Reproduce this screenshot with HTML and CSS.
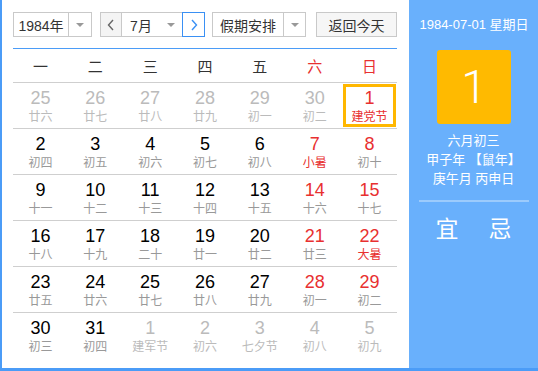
FILE: index.html
```html
<!DOCTYPE html>
<html lang="zh-CN">
  <head>
    <meta charset="UTF-8" />
    <title>万年历</title>
    <link rel="stylesheet" href="styles.css">
  </head>
  <body>
    <div class="calendar">
      <div class="main">
        <div class="toolbar">
          <div class="select year-select">
            <span class="select-text">1984年</span>
            <span class="select-arrow"></span>
          </div>
          <div class="month-group">
            <button class="nav-btn"><svg width="8" height="12" viewBox="0 0 8 12"><polyline points="6,1 1.5,6 6,11" fill="none" stroke="#666" stroke-width="1.4"/></svg></button>
            <div class="select month-select">
              <span class="select-text">7月</span>
              <span class="select-arrow"></span>
            </div>
            <button class="nav-btn next"><svg width="8" height="12" viewBox="0 0 8 12"><polyline points="2,1 6.5,6 2,11" fill="none" stroke="#3a90f4" stroke-width="1.4"/></svg></button>
          </div>
          <div class="select holiday-select">
            <span class="select-text">假期安排</span>
            <span class="select-arrow"></span>
          </div>
          <button class="today-btn">返回今天</button>
        </div>
        <div class="weekdays">
          <span>一</span><span>二</span><span>三</span><span>四</span><span>五</span><span class="red">六</span><span class="red">日</span>
        </div>
        <div class="days">
          <div class="week">
            <div class="day other"><b>25</b><i>廿六</i></div>
            <div class="day other"><b>26</b><i>廿七</i></div>
            <div class="day other"><b>27</b><i>廿八</i></div>
            <div class="day other"><b>28</b><i>廿九</i></div>
            <div class="day other"><b>29</b><i>初一</i></div>
            <div class="day other"><b>30</b><i>初二</i></div>
            <div class="day red today"><b>1</b><i class="fest">建党节</i></div>
          </div>
          <div class="week">
            <div class="day"><b>2</b><i>初四</i></div>
            <div class="day"><b>3</b><i>初五</i></div>
            <div class="day"><b>4</b><i>初六</i></div>
            <div class="day"><b>5</b><i>初七</i></div>
            <div class="day"><b>6</b><i>初八</i></div>
            <div class="day red"><b>7</b><i class="fest">小暑</i></div>
            <div class="day red"><b>8</b><i>初十</i></div>
          </div>
          <div class="week">
            <div class="day"><b>9</b><i>十一</i></div>
            <div class="day"><b>10</b><i>十二</i></div>
            <div class="day"><b>11</b><i>十三</i></div>
            <div class="day"><b>12</b><i>十四</i></div>
            <div class="day"><b>13</b><i>十五</i></div>
            <div class="day red"><b>14</b><i>十六</i></div>
            <div class="day red"><b>15</b><i>十七</i></div>
          </div>
          <div class="week">
            <div class="day"><b>16</b><i>十八</i></div>
            <div class="day"><b>17</b><i>十九</i></div>
            <div class="day"><b>18</b><i>二十</i></div>
            <div class="day"><b>19</b><i>廿一</i></div>
            <div class="day"><b>20</b><i>廿二</i></div>
            <div class="day red"><b>21</b><i>廿三</i></div>
            <div class="day red"><b>22</b><i class="fest">大暑</i></div>
          </div>
          <div class="week">
            <div class="day"><b>23</b><i>廿五</i></div>
            <div class="day"><b>24</b><i>廿六</i></div>
            <div class="day"><b>25</b><i>廿七</i></div>
            <div class="day"><b>26</b><i>廿八</i></div>
            <div class="day"><b>27</b><i>廿九</i></div>
            <div class="day red"><b>28</b><i>初一</i></div>
            <div class="day red"><b>29</b><i>初二</i></div>
          </div>
          <div class="week">
            <div class="day"><b>30</b><i>初三</i></div>
            <div class="day"><b>31</b><i>初四</i></div>
            <div class="day other"><b>1</b><i>建军节</i></div>
            <div class="day other"><b>2</b><i>初六</i></div>
            <div class="day other"><b>3</b><i>七夕节</i></div>
            <div class="day other"><b>4</b><i>初八</i></div>
            <div class="day other"><b>5</b><i>初九</i></div>
          </div>
        </div>
      </div>
      <div class="side">
        <p class="side-date">1984-07-01 星期日</p>
        <div class="big-day">1</div>
        <p class="lunar">六月初三</p>
        <p class="lunar">甲子年 【鼠年】</p>
        <p class="lunar">庚午月 丙申日</p>
        <div class="side-line"></div>
        <div class="yiji">
          <span>宜</span>
          <span>忌</span>
        </div>
      </div>
    </div>
  </body>
</html>
```

FILE: styles.css
```css
* {
  box-sizing: border-box;
  font-family: "Liberation Sans", "Noto Sans CJK SC", sans-serif;
}
body {
  margin: 0;
  background-color: #fff;
}
p {
  margin: 0;
}
.calendar {
  display: flex;
  width: 538px;
  height: 371px;
  border-left: 2px solid #4b9cf7;
  border-bottom: 3px solid #4b9cf7;
}
.main {
  width: 407px;
  padding: 12px 12px 0 11px;
  background-color: #fff;
}
.toolbar {
  display: flex;
  height: 25px;
}
.select {
  display: flex;
  height: 25px;
  border: 1px solid #c9c9c9;
  background-color: #fff;
}
.select-text {
  display: flex;
  align-items: center;
  justify-content: center;
  border-right: 1px solid #c9c9c9;
  font-size: 14px;
  color: #333;
}
.select-arrow {
  flex: 1;
  position: relative;
}
.select-arrow::after {
  content: "";
  position: absolute;
  left: 50%;
  top: 10px;
  margin-left: -4px;
  border-left: 4px solid transparent;
  border-right: 4px solid transparent;
  border-top: 4px solid #999;
}
.year-select {
  width: 79px;
}
.year-select .select-text {
  width: 55px;
}
.month-group {
  display: flex;
  width: 105px;
  margin-left: 8px;
}
.nav-btn {
  width: 22px;
  height: 25px;
  padding: 0;
  display: flex;
  align-items: center;
  justify-content: center;
  border: 1px solid #c9c9c9;
  background-color: #f4f4f4;
}
.nav-btn.next {
  width: 23px;
  border-color: #3a90f4;
  background-color: #fff;
}
.month-select {
  width: 60px;
  border-left: none;
  border-right: none;
}
.month-select .select-text {
  width: 38px;
  border-right: none;
}
.holiday-select {
  width: 94px;
  margin-left: 7px;
}
.holiday-select .select-text {
  width: 71px;
}
.today-btn {
  width: 81px;
  height: 25px;
  margin-left: 10px;
  padding: 0;
  border: 1px solid #c9c9c9;
  background-color: #f6f6f6;
  font-size: 14px;
  color: #333;
}
.weekdays {
  display: grid;
  grid-template-columns: repeat(7, 1fr);
  height: 35px;
  margin-top: 11px;
  border-top: 1px solid #4b9cf7;
  border-bottom: 1px solid #cfcfcf;
  align-items: center;
  text-align: center;
  font-size: 15px;
  color: #333;
}
.weekdays .red {
  color: #e83030;
}
.week {
  display: grid;
  grid-template-columns: repeat(7, 1fr);
  height: 46px;
  border-bottom: 1px solid #cfcfcf;
}
.week:last-child {
  border-bottom: none;
}
.day {
  display: flex;
  flex-direction: column;
  align-items: center;
  padding-top: 5px;
}
.day b {
  font-weight: normal;
  font-size: 18px;
  line-height: 20px;
  color: #000;
}
.day i {
  font-style: normal;
  font-size: 12px;
  line-height: 14px;
  margin-top: 2px;
  color: #999;
}
.day.red b,
.day i.fest {
  color: #e83030;
}
.day.other b {
  color: #bbb;
}
.day.other i {
  color: #bbb;
}
.day.today {
  outline: 3px solid #ffb700;
  outline-offset: -4px;
}
.side {
  flex: 1;
  display: flex;
  flex-direction: column;
  align-items: center;
  padding-top: 16px;
  background-color: #69b0fc;
  color: #fff;
}
.side-date {
  font-size: 13px;
  line-height: 18px;
  margin-left: 1px;
}
.big-day {
  width: 74px;
  height: 74px;
  margin-top: 16px;
  margin-left: 1px;
  display: flex;
  align-items: center;
  justify-content: center;
  border-radius: 3px;
  background-color: #ffba00;
  font-family: Roboto, "Liberation Sans", sans-serif;
  font-weight: 300;
  font-size: 46px;
}
.lunar {
  font-size: 13px;
  line-height: 19px;
}
.big-day + .lunar {
  margin-top: 7px;
}
.side-line {
  width: 110px;
  height: 2px;
  margin-top: 12px;
  background-color: #9ccbfc;
}
.yiji {
  display: flex;
  gap: 30px;
  margin-top: 14px;
  font-size: 23px;
  line-height: 26px;
}
```
